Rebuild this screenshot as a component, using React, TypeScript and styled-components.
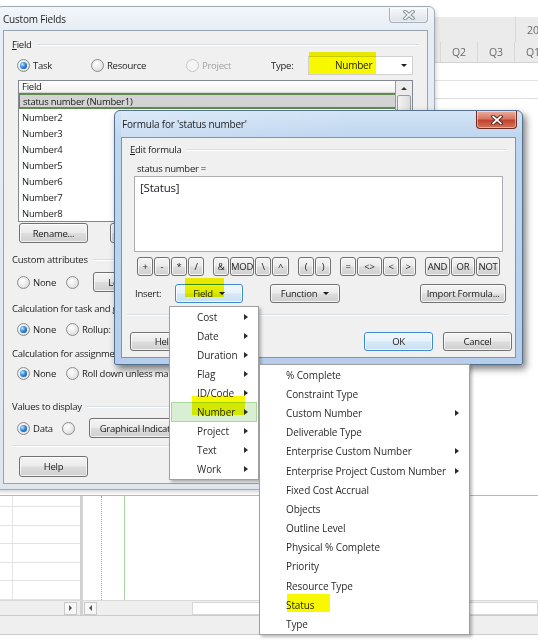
import React from 'react'
import styled, { createGlobalStyle, css } from 'styled-components'

const GlobalStyle = createGlobalStyle`
  * { box-sizing: border-box; }
  html, body { margin: 0; padding: 0; background: #ffffff; }
  body {
    font-family: "Open Sans", "Noto Sans", sans-serif;
    font-size: 9.5px;
    letter-spacing: -0.25px;
    color: #1b1b1b;
  }
`

const Desktop = styled.div`
  position: relative;
  width: 538px;
  height: 640px;
  overflow: hidden;
  background: #fff;
`

/* ---------- background application ---------- */

const AppShell = styled.div`
  display: flex;
  flex-direction: column;
  height: 100%;
`

const TopPane = styled.div`
  height: 495px;
  flex: none;
  display: flex;
  justify-content: flex-end;
  padding-top: 17px;
`

const Timeline = styled.div`
  width: 104px;
  display: flex;
  flex-direction: column;
`

const TimeHead = styled.div`
  height: 46px;
  background: #ebebeb;
  border-bottom: 1px solid #d3d3d3;
  display: flex;
  flex-direction: column;
  overflow: hidden;
  color: #6b6b6b;
  font-size: 10.5px;
  letter-spacing: 0;
`

const YearRow = styled.div`
  height: 25px;
  display: flex;
  padding-left: 81px;
`

const YearCell = styled.div`
  flex: 1;
  border-left: 1px solid #d8d8d8;
  padding: 6px 0 0 11px;
  white-space: nowrap;
`

const QuarterRow = styled.div`
  flex: 1;
  display: flex;
`

const QuarterCell = styled.div<{ $w: number }>`
  width: ${p => p.$w}px;
  flex: none;
  border-right: 1px solid #d8d8d8;
  display: flex;
  align-items: center;
  justify-content: center;
`

const TimeRow = styled.div`
  height: 18px;
  border-bottom: 1px solid #e0e0e0;
`

const GridArea = styled.div`
  height: 105px;
  flex: none;
  display: flex;
  border-top: 1px solid #b8b8b8;
`

const SheetCol = styled.div`
  width: 80px;
  display: flex;
  flex-direction: column;
`

const SheetRow = styled.div<{ $h: number }>`
  height: ${p => p.$h}px;
  flex: none;
  display: flex;
  border-bottom: 1px solid #e3e3e3;
`

const SheetIndex = styled.div`
  width: 13px;
  border-right: 1px solid #e3e3e3;
`

const Splitter = styled.div`
  width: 3px;
  flex: none;
  background: #d2d2d2;
`

const ChartPane = styled.div`
  flex: 1;
  display: flex;
  padding-left: 18px;
`

const DottedLine = styled.div`
  width: 23px;
  border-left: 1px dotted #a8a8a8;
`

const GreenLine = styled.div`
  width: 1px;
  background: #a6d2a6;
`

const ScrollRow = styled.div`
  height: 15px;
  flex: none;
  display: flex;
  background: #efefef;
  border-top: 1px solid #dadada;
`

const ScrollLeft = styled.div`
  width: 80px;
  display: flex;
  justify-content: flex-end;
  align-items: center;
  padding-right: 3px;
`

const ScrollRight = styled.div`
  flex: 1;
  display: flex;
  align-items: center;
  padding-left: 1px;
`

const ScrollArrow = styled.div<{ $dir: 'left' | 'right' }>`
  width: 13px;
  height: 13px;
  border: 1px solid #c9c9c9;
  background: #f7f7f7;
  display: flex;
  align-items: center;
  justify-content: center;
  &::after {
    content: '';
    border-top: 3px solid transparent;
    border-bottom: 3px solid transparent;
    ${p =>
      p.$dir === 'right'
        ? css`border-left: 3px solid #555;`
        : css`border-right: 3px solid #555;`}
  }
`

const ScrollTrack = styled.div`
  margin-left: 95px;
  flex: 1;
  height: 13px;
  background: #fff;
  border: 1px solid #d6d6d6;
`

const StatusBar = styled.div`
  height: 20px;
  flex: none;
  background: #efefef;
  border-top: 1px solid #cbcbcb;
  border-bottom: 1px solid #cbcbcb;
`

/* ---------- windows ---------- */

const Window = styled.div<{ $active?: boolean }>`
  position: absolute;
  display: flex;
  flex-direction: column;
  border: 1px solid ${p => (p.$active ? '#56708f' : '#a2abb5')};
  border-radius: 6px 6px 2px 2px;
  padding: 0 6px 5px;
  background: ${p =>
    p.$active
      ? 'linear-gradient(180deg, #d3e4f6 0px, #bfd6ef 26px, #b6ceeb 100%)'
      : 'linear-gradient(180deg, #f3f6fa 0px, #e6edf4 24px, #dfe6ee 100%)'};
  box-shadow: ${p =>
    p.$active ? '3px 4px 7px rgba(0, 0, 0, 0.5)' : '1px 2px 4px rgba(0, 0, 0, 0.18)'};
`

const CustomFieldsWindow = styled(Window)`
  left: -4px;
  top: 6px;
  width: 439px;
  height: 484px;
  z-index: 1;
`

const FormulaWindow = styled(Window)`
  left: 114px;
  top: 110px;
  width: 409px;
  height: 255px;
  z-index: 2;
  padding-bottom: 6px;
`

const TitleBar = styled.div<{ $h: number; $active?: boolean }>`
  height: ${p => p.$h}px;
  flex: none;
  display: flex;
  align-items: center;
  justify-content: space-between;
  font-size: 10px;
  letter-spacing: -0.2px;
  color: #1e1e1e;
  ${p =>
    p.$active &&
    css`
      background: linear-gradient(90deg, rgba(255, 255, 255, 0.2), rgba(255, 255, 255, 0) 60%);
    `}
`

const TitleText = styled.span<{ $pad: number }>`
  padding-left: ${p => p.$pad}px;
`

const CloseButton = styled.div<{ $red?: boolean }>`
  align-self: flex-start;
  width: ${p => (p.$red ? 41 : 39)}px;
  height: ${p => (p.$red ? 18 : 15)}px;
  margin-top: ${p => (p.$red ? 0 : 1)}px;
  margin-right: ${p => (p.$red ? -1 : 0)}px;
  border: 1px solid ${p => (p.$red ? '#6e2b22' : '#a7b0ba')};
  border-top: none;
  border-radius: 0 0 4px 4px;
  display: flex;
  align-items: center;
  justify-content: center;
  background: ${p =>
    p.$red
      ? 'linear-gradient(180deg, #eab0a2 0%, #d67764 45%, #c3432d 55%, #d3735a 100%)'
      : 'linear-gradient(180deg, #f7f9fb 0%, #e8edf2 50%, #dce3ea 100%)'};
  box-shadow: inset 0 0 0 1px rgba(255, 255, 255, 0.45);
`

const Client = styled.div<{ $border: string }>`
  flex: 1;
  min-height: 0;
  overflow: hidden;
  background: #f0f0f0;
  border: 1px solid ${p => p.$border};
  display: flex;
  flex-direction: column;
  padding: 6px 8px 0;
  position: relative;
`

const GroupHeader = styled.div<{ $mt: number }>`
  height: 14px;
  flex: none;
  margin-top: ${p => p.$mt}px;
  display: flex;
  align-items: center;
  gap: 5px;
  white-space: nowrap;
  &::after {
    content: '';
    flex: 1;
    height: 1px;
    background: #d5dfe5;
    box-shadow: 0 1px 0 #ffffff;
  }
`

const Row = styled.div<{ $mt: number; $indent?: number; $h?: number; $gap?: number }>`
  height: ${p => p.$h ?? 20}px;
  flex: none;
  margin-top: ${p => p.$mt}px;
  padding-left: ${p => p.$indent ?? 0}px;
  display: flex;
  align-items: center;
  gap: ${p => p.$gap ?? 0}px;
  white-space: nowrap;
`

const RadioItem = styled.div<{ $w?: number; $disabled?: boolean }>`
  width: ${p => (p.$w ? `${p.$w}px` : 'auto')};
  flex: none;
  display: flex;
  align-items: center;
  gap: 3px;
  color: ${p => (p.$disabled ? '#a3a3a3' : 'inherit')};
`

const RadioDot = styled.span<{ $on?: boolean; $disabled?: boolean }>`
  width: 13px;
  height: 13px;
  flex: none;
  border-radius: 50%;
  border: 1px solid ${p => (p.$disabled ? '#c6c6c6' : '#8c8c8c')};
  background: ${p =>
    p.$disabled
      ? '#f4f4f4'
      : 'radial-gradient(circle at 40% 35%, #ffffff 0%, #e6e6e6 60%, #cfcfcf 100%)'};
  display: flex;
  align-items: center;
  justify-content: center;
  &::after {
    content: '';
    display: ${p => (p.$on ? 'block' : 'none')};
    width: 7px;
    height: 7px;
    border-radius: 50%;
    background: radial-gradient(circle at 35% 35%, #c4e8ff 0%, #3289e0 45%, #0d3f86 100%);
  }
`

const Button = styled.div<{ $w: number; $default?: boolean }>`
  width: ${p => p.$w}px;
  height: 100%;
  flex: none;
  position: relative;
  display: flex;
  align-items: center;
  justify-content: center;
  gap: 6px;
  border: 1px solid ${p => (p.$default ? '#3d8ccb' : '#707070')};
  border-radius: 3px;
  background: ${p =>
    p.$default
      ? 'linear-gradient(180deg, #f1f8fd 0%, #e6f1f9 48%, #d6e8f5 52%, #cae0f0 100%)'
      : 'linear-gradient(180deg, #f4f4f4 0%, #ebebeb 48%, #dddddd 52%, #cfcfcf 100%)'};
  box-shadow: inset 0 0 0 1px rgba(255, 255, 255, 0.75);
  white-space: nowrap;
  overflow: hidden;
`

const DropArrow = styled.span`
  width: 0;
  height: 0;
  border-left: 3px solid transparent;
  border-right: 3px solid transparent;
  border-top: 3px solid #1b1b1b;
`

const TypeLabel = styled.span`
  width: 37px;
  flex: none;
`

const Combo = styled.div`
  width: 105px;
  height: 19px;
  flex: none;
  background: #fff;
  border: 1px solid #d0d0d0;
  display: flex;
  align-items: center;
  justify-content: space-between;
  padding: 0 5px 0 26px;
  font-size: 10px;
`

const ListBox = styled.div`
  margin: 5px 0 0 6px;
  width: 395px;
  height: 142px;
  flex: none;
  border: 1px solid #828790;
  background: #fff;
  display: flex;
`

const ListBody = styled.div`
  flex: 1;
  display: flex;
  flex-direction: column;
  border-right: 1px solid #9a9a9a;
`

const ListHeader = styled.div`
  height: 12px;
  flex: none;
  padding-left: 3px;
  display: flex;
  align-items: center;
  background: linear-gradient(180deg, #ffffff, #f2f2f2);
  border-bottom: 1px solid #d5d5d5;
`

const ListRow = styled.div<{ $selected?: boolean }>`
  height: 16px;
  flex: none;
  padding-left: 3px;
  display: flex;
  align-items: center;
  ${p =>
    p.$selected &&
    css`
      background: #d3d3d3;
      border-top: 2px solid #5e8d50;
      border-bottom: 2px solid #5e8d50;
      border-left: 1px solid #5e8d50;
    `}
`

const ScrollBar = styled.div`
  width: 16px;
  flex: none;
  background: #ececec;
  display: flex;
  flex-direction: column;
  padding: 1px;
  gap: 1px;
`

const ScrollUp = styled.div`
  height: 12px;
  display: flex;
  align-items: center;
  justify-content: center;
  &::after {
    content: '';
    border-left: 3px solid transparent;
    border-right: 3px solid transparent;
    border-bottom: 3px solid #333;
  }
`

const ScrollThumb = styled.div`
  height: 34px;
  border: 1px solid #9a9a9a;
  border-radius: 2px;
  background: linear-gradient(90deg, #f4f4f4, #dcdcdc);
`

const Separator = styled.div<{ $mt: number; $ml?: number; $w?: number }>`
  margin-top: ${p => p.$mt}px;
  margin-left: ${p => p.$ml ?? 0}px;
  width: ${p => (p.$w ? `${p.$w}px` : 'auto')};
  height: 1px;
  flex: none;
  background: #d5dfe5;
  box-shadow: 0 1px 0 #ffffff;
`

/* formula dialog parts */

const FormulaLabel = styled.div`
  height: 14px;
  flex: none;
  margin-top: 5px;
  padding-left: 7px;
  display: flex;
  align-items: center;
`

const FormulaBox = styled.div`
  margin: 1px 0 0 4px;
  width: 369px;
  height: 76px;
  flex: none;
  background: #fff;
  border: 1px solid #abadb3;
  padding: 3px 5px;
  font-size: 11.5px;
  letter-spacing: -0.2px;
  line-height: 16px;
  color: #222;
`

const OpRow = styled.div`
  height: 19px;
  flex: none;
  margin-top: 5px;
  padding-left: 7px;
  display: flex;
  gap: 9px;
`

const OpGroup = styled.div`
  display: flex;
  gap: 1px;
`

const InsertLabel = styled.span`
  width: 40px;
  flex: none;
`

/* ---------- menus ---------- */

const Menu = styled.div<{ $x: number; $y: number; $w: number }>`
  position: absolute;
  left: ${p => p.$x}px;
  top: ${p => p.$y}px;
  width: ${p => p.$w}px;
  z-index: 5;
  background: #ffffff;
  border: 1px solid #a0a0a0;
  box-shadow: 2px 2px 3px rgba(0, 0, 0, 0.28);
  display: flex;
  flex-direction: column;
  font-size: 10px;
  letter-spacing: -0.1px;
  color: #2b2b2b;
`

const MenuItem = styled.div<{ $h: number; $hot?: boolean; $pl: number; $pr: number }>`
  height: ${p => p.$h}px;
  flex: none;
  margin: 0 1px;
  padding: 0 ${p => p.$pr}px 0 ${p => p.$pl}px;
  display: flex;
  align-items: center;
  justify-content: space-between;
  white-space: nowrap;
  border: 1px solid transparent;
  ${p =>
    p.$hot &&
    css`
      background: #d9efd3;
      border-color: #a9d69e;
    `}
`

const SubArrow = styled.span`
  width: 0;
  height: 0;
  border-top: 3.5px solid transparent;
  border-bottom: 3.5px solid transparent;
  border-left: 4px solid #2b2b2b;
`

/* highlighter marks laid over the screenshot */
const Marker = styled.div<{ $x: number; $y: number; $w: number; $h: number }>`
  position: absolute;
  left: ${p => p.$x}px;
  top: ${p => p.$y}px;
  width: ${p => p.$w}px;
  height: ${p => p.$h}px;
  background: #f8f800;
  mix-blend-mode: multiply;
  z-index: 10;
  pointer-events: none;
`

const CloseX: React.FC<{ dim?: boolean }> = ({ dim }) => (
  <svg width="12" height="10" viewBox="0 0 12 10">
    <path
      d="M2.2 1.6 L9.8 8.4 M9.8 1.6 L2.2 8.4"
      stroke={dim ? '#7f8994' : '#4a1e18'}
      strokeWidth="3.6"
      strokeLinecap="square"
      fill="none"
    />
    <path
      d="M2.2 1.6 L9.8 8.4 M9.8 1.6 L2.2 8.4"
      stroke={dim ? '#f2f4f6' : '#ffffff'}
      strokeWidth="1.8"
      strokeLinecap="square"
      fill="none"
    />
  </svg>
)

const operatorGroups: [string, number][][] = [
  [['+', 16], ['-', 16], ['*', 16], ['/', 16]],
  [['&', 16], ['MOD', 24], ['\\', 16], ['^', 17]],
  [['(', 16], [')', 16]],
  [['=', 16], ['<>', 25], ['<', 16], ['>', 16]],
  [['AND', 25], ['OR', 24], ['NOT', 24]],
]

const fieldMenu = ['Cost', 'Date', 'Duration', 'Flag', 'ID/Code', 'Number', 'Project', 'Text', 'Work']

const numberMenu: [string, boolean][] = [
  ['% Complete', false],
  ['Constraint Type', false],
  ['Custom Number', true],
  ['Deliverable Type', false],
  ['Enterprise Custom Number', true],
  ['Enterprise Project Custom Number', true],
  ['Fixed Cost Accrual', false],
  ['Objects', false],
  ['Outline Level', false],
  ['Physical % Complete', false],
  ['Priority', false],
  ['Resource Type', false],
  ['Status', false],
  ['Type', false],
]

const numberRows = ['Number2', 'Number3', 'Number4', 'Number5', 'Number6', 'Number7', 'Number8']

const Radio: React.FC<{ label?: string; on?: boolean; disabled?: boolean; w?: number }> = ({
  label,
  on,
  disabled,
  w,
}) => (
  <RadioItem $w={w} $disabled={disabled}>
    <RadioDot $on={on} $disabled={disabled} />
    {label && <span>{label}</span>}
  </RadioItem>
)

export default function App() {
  return (
    <Desktop>
      <GlobalStyle />

      <AppShell>
        <TopPane>
          <Timeline>
            <TimeHead>
              <YearRow>
                <YearCell>2014</YearCell>
              </YearRow>
              <QuarterRow>
                <QuarterCell $w={7} />
                <QuarterCell $w={37}>Q2</QuarterCell>
                <QuarterCell $w={37}>Q3</QuarterCell>
                <QuarterCell $w={37}>Q1</QuarterCell>
              </QuarterRow>
            </TimeHead>
            <TimeRow />
            <TimeRow />
          </Timeline>
        </TopPane>

        <GridArea>
          <SheetCol>
            {[11, 19, 18, 19, 18, 19].map((h, i) => (
              <SheetRow key={i} $h={h}>
                <SheetIndex />
              </SheetRow>
            ))}
          </SheetCol>
          <Splitter />
          <ChartPane>
            <DottedLine />
            <GreenLine />
          </ChartPane>
        </GridArea>

        <ScrollRow>
          <ScrollLeft>
            <ScrollArrow $dir="right" />
          </ScrollLeft>
          <Splitter />
          <ScrollRight>
            <ScrollArrow $dir="left" />
            <ScrollTrack />
          </ScrollRight>
        </ScrollRow>

        <StatusBar />
      </AppShell>

      <CustomFieldsWindow>
        <TitleBar $h={23}>
          <TitleText $pad={0}>Custom Fields</TitleText>
          <CloseButton>
            <CloseX dim />
          </CloseButton>
        </TitleBar>
        <Client $border="#97a3b0">
          <GroupHeader $mt={0}>
            <span>
              <u>F</u>ield
            </span>
          </GroupHeader>
          <Row $mt={4} $indent={5}>
            <Radio label="Task" on w={74} />
            <Radio label="Resource" w={95} />
            <Radio label="Project" disabled w={85} />
            <TypeLabel>Type:</TypeLabel>
            <Combo>
              <span>Number</span>
              <DropArrow />
            </Combo>
          </Row>
          <ListBox>
            <ListBody>
              <ListHeader>Field</ListHeader>
              <ListRow $selected>status number (Number1)</ListRow>
              {numberRows.map(n => (
                <ListRow key={n}>{n}</ListRow>
              ))}
            </ListBody>
            <ScrollBar>
              <ScrollUp />
              <ScrollThumb />
            </ScrollBar>
          </ListBox>
          <Row $mt={1} $indent={7} $gap={22}>
            <Button $w={69}>Rename...</Button>
            <Button $w={69}>Delete</Button>
          </Row>

          <GroupHeader $mt={9}>Custom attributes</GroupHeader>
          <Row $mt={6} $indent={5}>
            <Radio label="None" w={49} />
            <Radio w={27} />
            <Button $w={69}>Lookup...</Button>
          </Row>

          <GroupHeader $mt={9}>Calculation for task and group summary rows</GroupHeader>
          <Row $mt={4} $indent={5}>
            <Radio label="None" on w={49} />
            <Radio label="Rollup:" />
          </Row>

          <GroupHeader $mt={7}>Calculation for assignment rows</GroupHeader>
          <Row $mt={3} $indent={5}>
            <Radio label="None" on w={49} />
            <Radio label="Roll down unless manually entered" />
          </Row>

          <GroupHeader $mt={16}>Values to display</GroupHeader>
          <Row $mt={5} $indent={5}>
            <Radio label="Data" on w={45} />
            <Radio w={27} />
            <Button $w={112}>Graphical Indicators...</Button>
          </Row>

          <Separator $mt={7} />
          <Row $mt={10} $indent={7} $h={21}>
            <Button $w={69}>Help</Button>
          </Row>
        </Client>
      </CustomFieldsWindow>

      <FormulaWindow $active>
        <TitleBar $h={26} $active>
          <TitleText $pad={1}>Formula for 'status number'</TitleText>
          <CloseButton $red>
            <CloseX />
          </CloseButton>
        </TitleBar>
        <Client $border="#7f93ab">
          <GroupHeader $mt={-2}>
            <span>
              <u>E</u>dit formula
            </span>
          </GroupHeader>
          <FormulaLabel>status number =</FormulaLabel>
          <FormulaBox>[Status]</FormulaBox>
          <OpRow>
            {operatorGroups.map((g, i) => (
              <OpGroup key={i}>
                {g.map(([op, w]) => (
                  <Button key={op} $w={w}>
                    {op}
                  </Button>
                ))}
              </OpGroup>
            ))}
          </OpRow>
          <Row $mt={8} $h={19} $indent={5}>
            <InsertLabel>Insert:</InsertLabel>
            <Button $w={68} $default>
              <span>Field</span>
              <DropArrow />
            </Button>
            <Button $w={70} style={{ marginLeft: 27 }}>
              <span>Function</span>
              <DropArrow />
            </Button>
            <Button $w={86} style={{ marginLeft: 80 }}>
              Import Formula...
            </Button>
          </Row>
          <Separator $mt={11} $ml={-3} $w={382} />
          <Row $mt={17} $h={19} $indent={-3}>
            <Button $w={69}>Help</Button>
            <Button $w={69} $default style={{ marginLeft: 165 }}>
              OK
            </Button>
            <Button $w={69} style={{ marginLeft: 10 }}>
              Cancel
            </Button>
          </Row>
        </Client>
      </FormulaWindow>

      <Menu $x={169} $y={306} $w={90}>
        {fieldMenu.map(item => (
          <MenuItem key={item} $h={19.1} $pl={25} $pr={8} $hot={item === 'Number'}>
            <span>{item}</span>
            <SubArrow />
          </MenuItem>
        ))}
      </Menu>

      <Menu $x={259} $y={364} $w={211}>
        {numberMenu.map(([item, sub]) => (
          <MenuItem key={item} $h={19.2} $pl={24} $pr={8}>
            <span>{item}</span>
            {sub && <SubArrow />}
          </MenuItem>
        ))}
      </Menu>

      <Marker $x={309} $y={52} $w={67} $h={22} />
      <Marker $x={185} $y={278} $w={39} $h={19} />
      <Marker $x={192} $y={396} $w={53} $h={19} />
      <Marker $x={287} $y={594} $w={43} $h={18} />
    </Desktop>
  )
}
